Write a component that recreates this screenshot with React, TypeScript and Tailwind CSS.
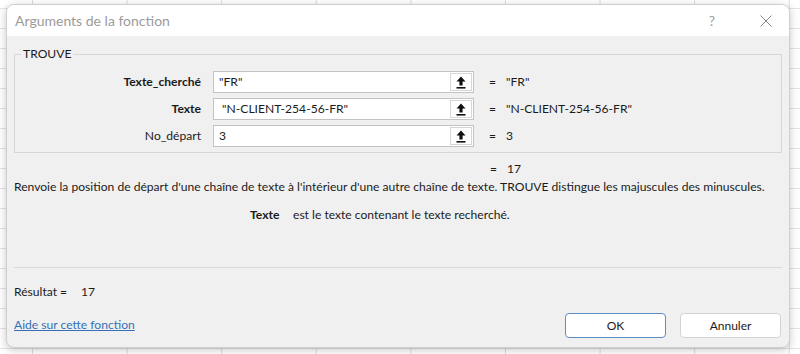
import React from 'react';

const font = "font-['Segoe_UI','Lato',sans-serif]";

const RefIcon = () => (
  <svg width="10" height="13" viewBox="0 0 10 13" aria-hidden="true">
    <path d="M5 0.5 L9.5 5.5 H6.6 V9.5 H3.4 V5.5 H0.5 Z" fill="#111" />
    <rect x="0.5" y="11" width="9" height="1.6" fill="#111" />
  </svg>
);

type Arg = { label: string; value: string; result: string; bold: boolean };

const args: Arg[] = [
  { label: 'Texte_cherché', value: '"FR"', result: '"FR"', bold: true },
  { label: 'Texte', value: ' "N-CLIENT-254-56-FR"', result: '"N-CLIENT-254-56-FR"', bold: true },
  { label: 'No_départ', value: '3', result: '3', bold: false },
];

const ArgRow: React.FC<{ arg: Arg }> = ({ arg }) => (
  <div className="flex h-[22px] items-center">
    <div className={`w-[186px] text-right ${arg.bold ? 'font-bold' : ''}`}>{arg.label}</div>
    <div className="ml-[12px] flex h-[22px] w-[261px] items-stretch border border-[#c3c3c3] bg-white">
      <div className="flex-1 whitespace-pre pl-[5px] leading-[20px]">{arg.value}</div>
      <div className="my-[1px] mr-[1px] flex w-[22px] items-center justify-center border border-[#d6d6d6] bg-white">
        <RefIcon />
      </div>
    </div>
    <div className="ml-[15px] w-[17px]">=</div>
    <div>{arg.result}</div>
  </div>
);

const App: React.FC = () => {
  return (
    <div
      className={`h-[354px] w-[800px] overflow-hidden bg-white bg-[linear-gradient(to_right,#dcdcdc_1px,transparent_1px),linear-gradient(to_bottom,#e4e4e4_1px,transparent_1px)] bg-[size:94.6px_20px] bg-[position:32px_8px] pl-[6px] pt-[4px] text-[12.1px] text-[#1b1b1b] ${font}`}
    >
      <div className="flex h-[344px] w-[784px] flex-col overflow-hidden rounded-[8px] border border-[#cfcfcf] bg-[#f0f0f0] shadow-[0_2px_8px_rgba(0,0,0,0.22)]">
        <div className="flex h-[33px] items-center bg-white pl-[8px]">
          <div className="flex-1 text-[14px] text-[#9b9b9b]">Arguments de la fonction</div>
          <div className="w-[20px] text-center text-[14px] text-[#9b9b9b]">?</div>
          <div className="ml-[37px] mr-[16px] flex w-[14px] items-center justify-center">
            <svg width="12" height="12" viewBox="0 0 12 12" aria-hidden="true">
              <path d="M0.5 0.5 L11.5 11.5 M11.5 0.5 L0.5 11.5" stroke="#8a8a8a" strokeWidth="1" />
            </svg>
          </div>
        </div>

        <div className="flex flex-1 flex-col px-[7px] pb-[9px] pt-[10px]">
          <fieldset className="h-[107px] border border-[#d7d7d7] pt-[9px]">
            <legend className="ml-[6px] px-[2px] leading-[16px]">TROUVE</legend>
            <div className="flex flex-col gap-[5px]">
              {args.map((a) => (
                <ArgRow key={a.label} arg={a} />
              ))}
            </div>
          </fieldset>

          <div className="mt-[8px] flex h-[16px] items-center leading-[16px]">
            <div className="ml-[476px] w-[17px]">=</div>
            <div>17</div>
          </div>
          <div className="mt-[2px] whitespace-nowrap leading-[16px]">
            Renvoie la position de départ d'une chaîne de texte à l'intérieur d'une autre chaîne de texte. TROUVE distingue les majuscules des minuscules.
          </div>
          <div className="ml-[236px] mt-[12px] flex leading-[16px]">
            <span className="w-[43px] font-bold">Texte</span>
            <span>est le texte contenant le texte recherché.</span>
          </div>

          <div className="mt-[44px] h-px bg-[#dadada]" />

          <div className="mt-[16px] flex leading-[16px]">
            <span className="w-[67px]">Résultat =</span>
            <span>17</span>
          </div>

          <div className="mt-[13px] flex items-center">
            <a href="#" className="flex-1 text-[#3470b8] underline">
              Aide sur cette fonction
            </a>
            <button className="h-[25px] w-[101px] rounded-[4px] border border-[#5b8dc9] bg-white text-[12px] text-[#1b1b1b]">
              OK
            </button>
            <button className="ml-[14px] mr-[1px] h-[25px] w-[101px] rounded-[4px] border border-[#d3d3d3] bg-white text-[12px] text-[#1b1b1b]">
              Annuler
            </button>
          </div>
        </div>
      </div>
    </div>
  );
};

export default App;
